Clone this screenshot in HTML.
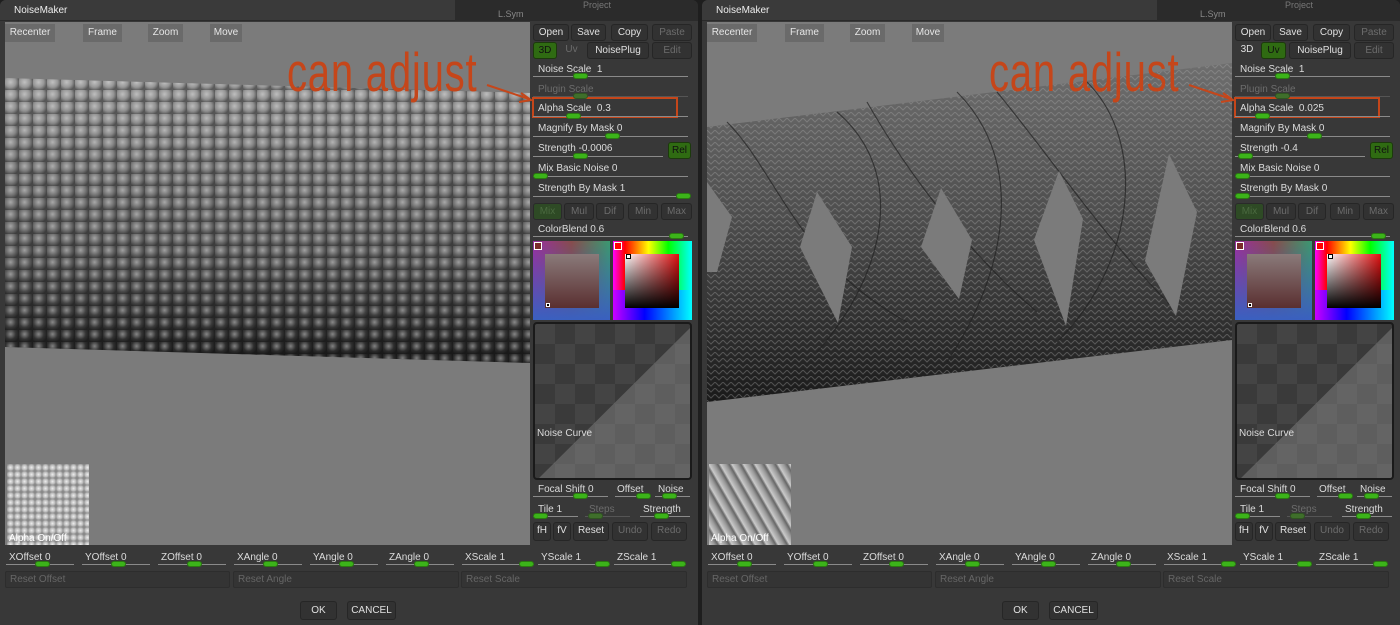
<!DOCTYPE html>
<html><head><meta charset="utf-8"><style>
*{margin:0;padding:0;box-sizing:border-box}
body{width:1400px;height:625px;background:#1e1e1e;position:relative;overflow:hidden;font-family:"Liberation Sans",sans-serif;font-size:10px;color:#d8d8d8}
.p{position:absolute;top:0;width:698px;height:625px;background:#383838;border-radius:6px 6px 0 0;overflow:hidden}
.a{position:absolute}
.tb{left:0;top:0;width:455px;height:21px;background:#3a3a3a;border-bottom:1px solid #2a2a2a}
.tr{left:455px;top:0;width:243px;height:21px;background:#2b2b2b}
.vp{left:5px;top:22px;width:525px;height:523px;background:#7b7b7b}
.vb{top:24px;height:18px;background:#6a6a6a;color:#e6e6e6;line-height:18px;text-align:center;font-size:10px}
.b{height:17px;background:#323232;border:1px solid #262626;border-radius:3px;line-height:15px;text-align:center;color:#e0e0e0;font-size:10px}
.l{font-size:10px;color:#dcdcdc;white-space:nowrap}
.d,.l.d{color:#6c6c6c}
.g{background:#2f6b12;border-color:#1c3a0c;color:#111}
.gd{background:#2e4a25;color:#4b6a40;border-color:#2a2a2a}
.ln{height:1px;background:#8a8a8a}
.k{width:15px;height:6px;background:#3cb31a;border-radius:3px;border:1px solid #2a7a10}
.kd{background:#3f6f2b;border-color:#2f5520}
.ann{font-family:"Liberation Sans Narrow","Liberation Sans",sans-serif;font-size:55px;color:#c5461a;letter-spacing:1px;transform:scaleX(.73);transform-origin:0 0;line-height:55px}
.bx{border:2px solid #c5461a}
.chk{left:533px;top:322px;width:159px;height:158px;border:2px solid #1a1a1a;border-radius:4px;overflow:hidden;background-color:#444;background-image:linear-gradient(45deg,#3a3a3a 25%,transparent 25%,transparent 75%,#3a3a3a 75%),linear-gradient(45deg,#3a3a3a 25%,transparent 25%,transparent 75%,#3a3a3a 75%);background-size:40px 40px;background-position:0 0,20px 20px}
.rb{top:571px;height:17px;background:#343434;border:1px solid #2d2d2d;border-radius:2px;color:#666;line-height:15px;padding-left:4px}
</style></head><body>

<!-- LEFT PANEL -->
<div class="p" style="left:0">
 <div class="a tb"></div><div class="a tr"></div>
 <div class="a l" style="left:14px;top:5px;color:#eee">NoiseMaker</div>
 <div class="a l" style="left:498px;top:9px;color:#888;font-size:9px">L.Sym</div>
 <div class="a l" style="left:583px;top:0px;color:#777;font-size:9px">Project</div>
 <div class="a vp"></div>
 <div class="a" style="left:5px;top:78px;width:525px;height:290px;clip-path:polygon(0 0,100% 15px,100% 285px,0 269px);background:radial-gradient(circle at 40% 35%,rgba(255,255,255,.4) 0,rgba(255,255,255,0) 45%,rgba(0,0,0,.4) 75%) 0 0/14px 12px,linear-gradient(#9a9a9a,#7a7a7a 30%,#626262 60%,#2a2a2a 95%)"></div>
 <div class="a vb" style="left:5px;width:50px">Recenter</div>
 <div class="a vb" style="left:83px;width:39px">Frame</div>
 <div class="a vb" style="left:148px;width:35px">Zoom</div>
 <div class="a vb" style="left:210px;width:32px">Move</div>
 <div class="a" style="left:7px;top:464px;width:82px;height:81px;background:radial-gradient(circle,#eee 0,#bbb 50%,#888 80%) 0 0/7px 7px,#aaa"></div>
 <div class="a l" style="left:9px;top:533px;color:#fff">Alpha On/Off</div>
 <div class="a ann" style="left:287px;top:45px">can adjust</div>
 <svg class="a" style="left:485px;top:82px" width="50" height="25"><line x1="2" y1="3" x2="44" y2="17" stroke="#c5461a" stroke-width="2"/><path d="M36 11 L46 18 L34 20" fill="none" stroke="#c5461a" stroke-width="2"/></svg>
 <div class="a bx" style="left:532px;top:97px;width:146px;height:21px"></div>
 <div class="a b" style="left:533px;top:24px;width:36px">Open</div>
 <div class="a b" style="left:571px;top:24px;width:35px">Save</div>
 <div class="a b" style="left:611px;top:24px;width:37px">Copy</div>
 <div class="a b d" style="left:652px;top:24px;width:40px">Paste</div>
 <div class="a b g" style="left:533px;top:42px;width:24px">3D</div>
 <div class="a b d" style="left:559px;top:42px;width:25px;background:none;border:none">Uv</div>
 <div class="a b" style="left:587px;top:42px;width:62px">NoisePlug</div>
 <div class="a b d" style="left:652px;top:42px;width:40px">Edit</div>
 <div class="a l" style="left:538px;top:64px">Noise Scale&nbsp; 1</div><div class="a ln" style="left:533px;top:76px;width:155px"></div><div class="a k" style="left:573px;top:73px"></div>
 <div class="a l d" style="left:538px;top:84px">Plugin Scale</div><div class="a ln" style="left:533px;top:96px;width:155px;background:#555"></div><div class="a k kd" style="left:573px;top:93px"></div>
 <div class="a l" style="left:538px;top:103px">Alpha Scale&nbsp; 0.3</div><div class="a ln" style="left:533px;top:116px;width:155px"></div><div class="a k" style="left:566px;top:113px"></div>
 <div class="a l" style="left:538px;top:123px">Magnify By Mask 0</div><div class="a ln" style="left:533px;top:136px;width:155px"></div><div class="a k" style="left:605px;top:133px"></div>
 <div class="a l" style="left:538px;top:143px">Strength -0.0006</div><div class="a ln" style="left:533px;top:156px;width:130px"></div><div class="a k" style="left:573px;top:153px"></div>
 <div class="a b g" style="left:668px;top:142px;width:23px;height:17px">Rel</div>
 <div class="a l" style="left:538px;top:163px">Mix Basic Noise 0</div><div class="a ln" style="left:533px;top:176px;width:155px"></div><div class="a k" style="left:533px;top:173px"></div>
 <div class="a l" style="left:538px;top:183px">Strength By Mask 1</div><div class="a ln" style="left:533px;top:196px;width:155px"></div><div class="a k" style="left:676px;top:193px"></div>
 <div class="a b gd" style="left:533px;top:203px;width:29px">Mix</div>
 <div class="a b d" style="left:564px;top:203px;width:30px">Mul</div>
 <div class="a b d" style="left:596px;top:203px;width:28px">Dif</div>
 <div class="a b d" style="left:628px;top:203px;width:30px">Min</div>
 <div class="a b d" style="left:661px;top:203px;width:31px">Max</div>
 <div class="a l" style="left:538px;top:224px">ColorBlend 0.6</div><div class="a ln" style="left:533px;top:236px;width:155px"></div><div class="a k" style="left:669px;top:233px"></div>
 <div class="a" style="left:533px;top:241px;width:77px;height:79px;background:linear-gradient(to top,#3a60c0,rgba(0,0,0,0)),linear-gradient(to right,#9a2fa0,#884c4c 50%,#3a9a70)"></div>
 <div class="a" style="left:545px;top:254px;width:54px;height:54px;background:linear-gradient(#8a7a7a,#5a2f30)"></div>
 <div class="a" style="left:534px;top:242px;width:8px;height:8px;background:#7a2a2a;border:1px solid #fff"></div>
 <div class="a" style="left:546px;top:303px;width:4px;height:4px;border:1px solid #fff;background:#000"></div>
 <div class="a" style="left:613px;top:241px;width:79px;height:79px;background:linear-gradient(to right,#f0f 0,#f00 15%,#ff0 45%,#0f0 70%,#0ff 100%)"></div>
 <div class="a" style="left:613px;top:290px;width:79px;height:30px;background:linear-gradient(to right,#c0f,#00f 40%,#0ff)"></div>
 <div class="a" style="left:625px;top:254px;width:54px;height:54px;background:linear-gradient(to bottom,transparent,#000),linear-gradient(to right,#fff,#e01010)"></div>
 <div class="a" style="left:614px;top:242px;width:8px;height:8px;background:#f00;border:1px solid #fff"></div>
 <div class="a" style="left:626px;top:254px;width:5px;height:5px;border:1px solid #000;background:#fff"></div>
 <div class="a chk"><svg width="159" height="158" style="position:absolute;left:0;top:0"><polygon points="159,0 159,158 0,158" fill="rgba(140,140,140,.45)"/></svg><div class="a l" style="left:2px;top:104px">Noise Curve</div></div>
 <div class="a l" style="left:538px;top:484px">Focal Shift 0</div><div class="a ln" style="left:533px;top:496px;width:75px"></div><div class="a k" style="left:573px;top:493px"></div>
 <div class="a l" style="left:617px;top:484px">Offset</div><div class="a ln" style="left:615px;top:496px;width:35px"></div><div class="a k" style="left:636px;top:493px"></div>
 <div class="a l" style="left:658px;top:484px">Noise</div><div class="a ln" style="left:655px;top:496px;width:35px"></div><div class="a k" style="left:662px;top:493px"></div>
 <div class="a l" style="left:538px;top:504px">Tile 1</div><div class="a ln" style="left:533px;top:516px;width:45px"></div><div class="a k" style="left:533px;top:513px"></div>
 <div class="a l d" style="left:589px;top:504px">Steps</div><div class="a ln" style="left:585px;top:516px;width:45px;background:#555"></div><div class="a k kd" style="left:588px;top:513px"></div>
 <div class="a l" style="left:643px;top:504px">Strength</div><div class="a ln" style="left:640px;top:516px;width:50px"></div><div class="a k" style="left:654px;top:513px"></div>
 <div class="a b" style="left:533px;top:522px;width:18px;height:19px">fH</div>
 <div class="a b" style="left:553px;top:522px;width:18px;height:19px">fV</div>
 <div class="a b" style="left:573px;top:522px;width:36px;height:19px">Reset</div>
 <div class="a b d" style="left:612px;top:522px;width:36px;height:19px">Undo</div>
 <div class="a b d" style="left:651px;top:522px;width:36px;height:19px">Redo</div>
 <div class="a l" style="left:9px;top:552px">XOffset 0</div><div class="a ln" style="left:6px;top:564px;width:68px"></div><div class="a k" style="left:35px;top:561px"></div>
 <div class="a l" style="left:85px;top:552px">YOffset 0</div><div class="a ln" style="left:82px;top:564px;width:68px"></div><div class="a k" style="left:111px;top:561px"></div>
 <div class="a l" style="left:161px;top:552px">ZOffset 0</div><div class="a ln" style="left:158px;top:564px;width:68px"></div><div class="a k" style="left:187px;top:561px"></div>
 <div class="a l" style="left:237px;top:552px">XAngle 0</div><div class="a ln" style="left:234px;top:564px;width:68px"></div><div class="a k" style="left:263px;top:561px"></div>
 <div class="a l" style="left:313px;top:552px">YAngle 0</div><div class="a ln" style="left:310px;top:564px;width:68px"></div><div class="a k" style="left:339px;top:561px"></div>
 <div class="a l" style="left:389px;top:552px">ZAngle 0</div><div class="a ln" style="left:386px;top:564px;width:68px"></div><div class="a k" style="left:414px;top:561px"></div>
 <div class="a l" style="left:465px;top:552px">XScale 1</div><div class="a ln" style="left:462px;top:564px;width:72px"></div><div class="a k" style="left:519px;top:561px"></div>
 <div class="a l" style="left:541px;top:552px">YScale 1</div><div class="a ln" style="left:538px;top:564px;width:72px"></div><div class="a k" style="left:595px;top:561px"></div>
 <div class="a l" style="left:617px;top:552px">ZScale 1</div><div class="a ln" style="left:614px;top:564px;width:72px"></div><div class="a k" style="left:671px;top:561px"></div>
 <div class="a rb" style="left:5px;width:225px">Reset Offset</div>
 <div class="a rb" style="left:233px;width:226px">Reset Angle</div>
 <div class="a rb" style="left:461px;width:226px">Reset Scale</div>
 <div class="a b" style="left:300px;top:601px;width:37px;height:19px;line-height:17px">OK</div>
 <div class="a b" style="left:347px;top:601px;width:49px;height:19px;line-height:17px">CANCEL</div>
</div>

<!-- RIGHT PANEL -->
<div class="p" style="left:702px">
 <div class="a tb"></div><div class="a tr"></div>
 <div class="a l" style="left:14px;top:5px;color:#eee">NoiseMaker</div>
 <div class="a l" style="left:498px;top:9px;color:#888;font-size:9px">L.Sym</div>
 <div class="a l" style="left:583px;top:0px;color:#777;font-size:9px">Project</div>
 <div class="a vp"></div>
 <svg class="a" style="left:5px;top:22px" width="525" height="523">
  <defs><pattern id="hb" width="8" height="6" patternUnits="userSpaceOnUse"><path d="M0 0 L4 4 L8 0" fill="none" stroke="#aaa" stroke-width="1" opacity=".35"/></pattern>
  <linearGradient id="sh" x1="0" y1="0" x2="0" y2="1"><stop offset="0" stop-color="#6e6e6e"/><stop offset=".45" stop-color="#4e4e4e"/><stop offset="1" stop-color="#1a1a1a"/></linearGradient></defs>
  <polygon points="0,105 525,41 525,318 0,380" fill="url(#sh)"/>
  <polygon points="0,105 525,41 525,318 0,380" fill="url(#hb)"/>
  <g fill="none" stroke="#222" stroke-width="1.2" opacity=".7">
   <path d="M20,100 C70,150 90,240 200,300"/><path d="M130,90 C200,150 180,250 110,330"/>
   <path d="M250,70 C320,140 300,250 240,340"/><path d="M380,60 C440,120 430,240 350,320"/>
   <path d="M160,80 C200,150 260,230 330,290"/><path d="M290,70 C340,130 400,220 470,290"/>
  </g>
  <g fill="#7b7b7b">
   <polygon points="110,170 145,225 131,301 93,225"/>
   <polygon points="234,166 265,218 252,277 214,225"/>
   <polygon points="352,149 376,197 359,304 327,218"/>
   <polygon points="462,132 490,190 469,294 438,239"/>
   <polygon points="0,160 25,195 10,250 0,250"/>
  </g>
 </svg>
 <div class="a vb" style="left:5px;width:50px">Recenter</div>
 <div class="a vb" style="left:83px;width:39px">Frame</div>
 <div class="a vb" style="left:148px;width:35px">Zoom</div>
 <div class="a vb" style="left:210px;width:32px">Move</div>
 <div class="a" style="left:7px;top:464px;width:82px;height:81px;background:repeating-linear-gradient(60deg,#ccc 0,#999 5px,#666 8px,#bbb 10px),#aaa"></div>
 <div class="a l" style="left:9px;top:533px;color:#fff">Alpha On/Off</div>
 <div class="a ann" style="left:287px;top:45px">can adjust</div>
 <svg class="a" style="left:485px;top:82px" width="50" height="25"><line x1="2" y1="3" x2="44" y2="17" stroke="#c5461a" stroke-width="2"/><path d="M36 11 L46 18 L34 20" fill="none" stroke="#c5461a" stroke-width="2"/></svg>
 <div class="a bx" style="left:532px;top:97px;width:146px;height:21px"></div>
 <div class="a b" style="left:533px;top:24px;width:36px">Open</div>
 <div class="a b" style="left:571px;top:24px;width:35px">Save</div>
 <div class="a b" style="left:611px;top:24px;width:37px">Copy</div>
 <div class="a b d" style="left:652px;top:24px;width:40px">Paste</div>
 <div class="a b" style="left:533px;top:42px;width:24px;background:none;border:none">3D</div>
 <div class="a b g" style="left:559px;top:42px;width:25px">Uv</div>
 <div class="a b" style="left:587px;top:42px;width:62px">NoisePlug</div>
 <div class="a b d" style="left:652px;top:42px;width:40px">Edit</div>
 <div class="a l" style="left:538px;top:64px">Noise Scale&nbsp; 1</div><div class="a ln" style="left:533px;top:76px;width:155px"></div><div class="a k" style="left:573px;top:73px"></div>
 <div class="a l d" style="left:538px;top:84px">Plugin Scale</div><div class="a ln" style="left:533px;top:96px;width:155px;background:#555"></div><div class="a k kd" style="left:573px;top:93px"></div>
 <div class="a l" style="left:538px;top:103px">Alpha Scale&nbsp; 0.025</div><div class="a ln" style="left:533px;top:116px;width:155px"></div><div class="a k" style="left:553px;top:113px"></div>
 <div class="a l" style="left:538px;top:123px">Magnify By Mask 0</div><div class="a ln" style="left:533px;top:136px;width:155px"></div><div class="a k" style="left:605px;top:133px"></div>
 <div class="a l" style="left:538px;top:143px">Strength -0.4</div><div class="a ln" style="left:533px;top:156px;width:130px"></div><div class="a k" style="left:536px;top:153px"></div>
 <div class="a b g" style="left:668px;top:142px;width:23px;height:17px">Rel</div>
 <div class="a l" style="left:538px;top:163px">Mix Basic Noise 0</div><div class="a ln" style="left:533px;top:176px;width:155px"></div><div class="a k" style="left:533px;top:173px"></div>
 <div class="a l" style="left:538px;top:183px">Strength By Mask 0</div><div class="a ln" style="left:533px;top:196px;width:155px"></div><div class="a k" style="left:533px;top:193px"></div>
 <div class="a b gd" style="left:533px;top:203px;width:29px">Mix</div>
 <div class="a b d" style="left:564px;top:203px;width:30px">Mul</div>
 <div class="a b d" style="left:596px;top:203px;width:28px">Dif</div>
 <div class="a b d" style="left:628px;top:203px;width:30px">Min</div>
 <div class="a b d" style="left:661px;top:203px;width:31px">Max</div>
 <div class="a l" style="left:538px;top:224px">ColorBlend 0.6</div><div class="a ln" style="left:533px;top:236px;width:155px"></div><div class="a k" style="left:669px;top:233px"></div>
 <div class="a" style="left:533px;top:241px;width:77px;height:79px;background:linear-gradient(to top,#3a60c0,rgba(0,0,0,0)),linear-gradient(to right,#9a2fa0,#884c4c 50%,#3a9a70)"></div>
 <div class="a" style="left:545px;top:254px;width:54px;height:54px;background:linear-gradient(#8a7a7a,#5a2f30)"></div>
 <div class="a" style="left:534px;top:242px;width:8px;height:8px;background:#7a2a2a;border:1px solid #fff"></div>
 <div class="a" style="left:546px;top:303px;width:4px;height:4px;border:1px solid #fff;background:#000"></div>
 <div class="a" style="left:613px;top:241px;width:79px;height:79px;background:linear-gradient(to right,#f0f 0,#f00 15%,#ff0 45%,#0f0 70%,#0ff 100%)"></div>
 <div class="a" style="left:613px;top:290px;width:79px;height:30px;background:linear-gradient(to right,#c0f,#00f 40%,#0ff)"></div>
 <div class="a" style="left:625px;top:254px;width:54px;height:54px;background:linear-gradient(to bottom,transparent,#000),linear-gradient(to right,#fff,#e01010)"></div>
 <div class="a" style="left:614px;top:242px;width:8px;height:8px;background:#f00;border:1px solid #fff"></div>
 <div class="a" style="left:626px;top:254px;width:5px;height:5px;border:1px solid #000;background:#fff"></div>
 <div class="a chk"><svg width="159" height="158" style="position:absolute;left:0;top:0"><polygon points="159,0 159,158 0,158" fill="rgba(140,140,140,.45)"/></svg><div class="a l" style="left:2px;top:104px">Noise Curve</div></div>
 <div class="a l" style="left:538px;top:484px">Focal Shift 0</div><div class="a ln" style="left:533px;top:496px;width:75px"></div><div class="a k" style="left:573px;top:493px"></div>
 <div class="a l" style="left:617px;top:484px">Offset</div><div class="a ln" style="left:615px;top:496px;width:35px"></div><div class="a k" style="left:636px;top:493px"></div>
 <div class="a l" style="left:658px;top:484px">Noise</div><div class="a ln" style="left:655px;top:496px;width:35px"></div><div class="a k" style="left:662px;top:493px"></div>
 <div class="a l" style="left:538px;top:504px">Tile 1</div><div class="a ln" style="left:533px;top:516px;width:45px"></div><div class="a k" style="left:533px;top:513px"></div>
 <div class="a l d" style="left:589px;top:504px">Steps</div><div class="a ln" style="left:585px;top:516px;width:45px;background:#555"></div><div class="a k kd" style="left:588px;top:513px"></div>
 <div class="a l" style="left:643px;top:504px">Strength</div><div class="a ln" style="left:640px;top:516px;width:50px"></div><div class="a k" style="left:654px;top:513px"></div>
 <div class="a b" style="left:533px;top:522px;width:18px;height:19px">fH</div>
 <div class="a b" style="left:553px;top:522px;width:18px;height:19px">fV</div>
 <div class="a b" style="left:573px;top:522px;width:36px;height:19px">Reset</div>
 <div class="a b d" style="left:612px;top:522px;width:36px;height:19px">Undo</div>
 <div class="a b d" style="left:651px;top:522px;width:36px;height:19px">Redo</div>
 <div class="a l" style="left:9px;top:552px">XOffset 0</div><div class="a ln" style="left:6px;top:564px;width:68px"></div><div class="a k" style="left:35px;top:561px"></div>
 <div class="a l" style="left:85px;top:552px">YOffset 0</div><div class="a ln" style="left:82px;top:564px;width:68px"></div><div class="a k" style="left:111px;top:561px"></div>
 <div class="a l" style="left:161px;top:552px">ZOffset 0</div><div class="a ln" style="left:158px;top:564px;width:68px"></div><div class="a k" style="left:187px;top:561px"></div>
 <div class="a l" style="left:237px;top:552px">XAngle 0</div><div class="a ln" style="left:234px;top:564px;width:68px"></div><div class="a k" style="left:263px;top:561px"></div>
 <div class="a l" style="left:313px;top:552px">YAngle 0</div><div class="a ln" style="left:310px;top:564px;width:68px"></div><div class="a k" style="left:339px;top:561px"></div>
 <div class="a l" style="left:389px;top:552px">ZAngle 0</div><div class="a ln" style="left:386px;top:564px;width:68px"></div><div class="a k" style="left:414px;top:561px"></div>
 <div class="a l" style="left:465px;top:552px">XScale 1</div><div class="a ln" style="left:462px;top:564px;width:72px"></div><div class="a k" style="left:519px;top:561px"></div>
 <div class="a l" style="left:541px;top:552px">YScale 1</div><div class="a ln" style="left:538px;top:564px;width:72px"></div><div class="a k" style="left:595px;top:561px"></div>
 <div class="a l" style="left:617px;top:552px">ZScale 1</div><div class="a ln" style="left:614px;top:564px;width:72px"></div><div class="a k" style="left:671px;top:561px"></div>
 <div class="a rb" style="left:5px;width:225px">Reset Offset</div>
 <div class="a rb" style="left:233px;width:226px">Reset Angle</div>
 <div class="a rb" style="left:461px;width:226px">Reset Scale</div>
 <div class="a b" style="left:300px;top:601px;width:37px;height:19px;line-height:17px">OK</div>
 <div class="a b" style="left:347px;top:601px;width:49px;height:19px;line-height:17px">CANCEL</div>
</div>
</body></html>
